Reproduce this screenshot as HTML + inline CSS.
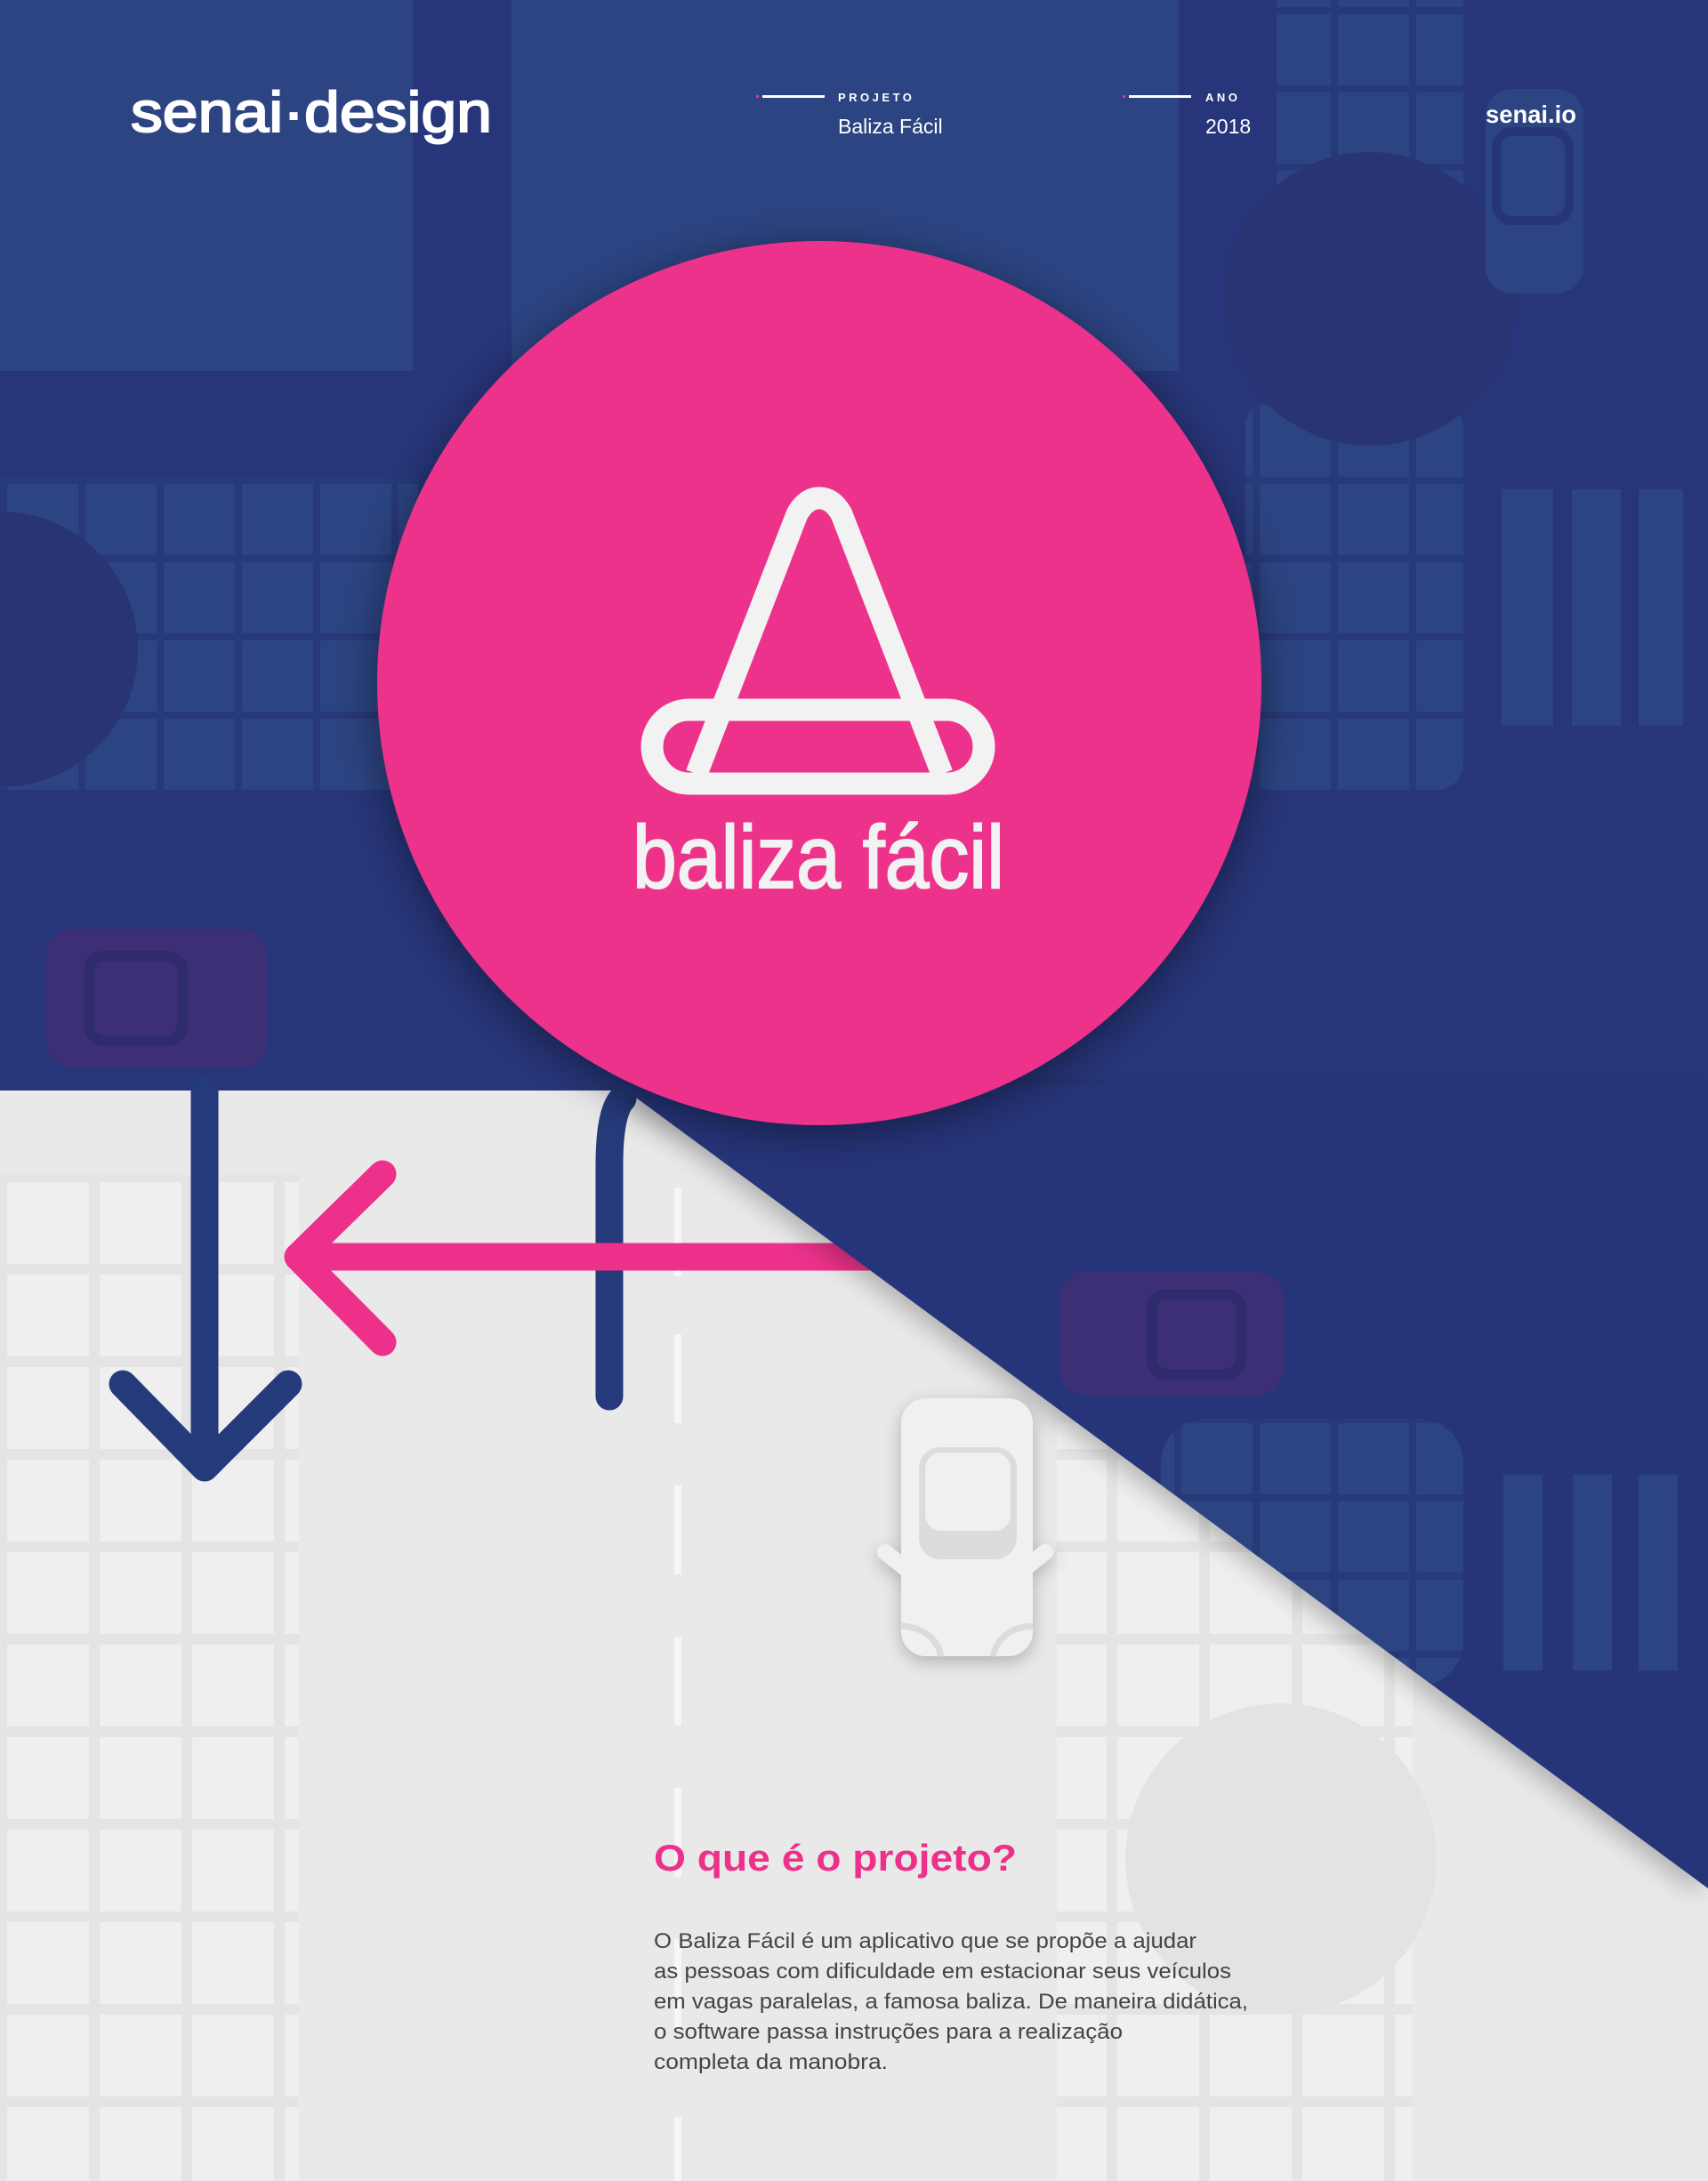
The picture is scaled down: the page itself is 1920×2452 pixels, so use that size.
<!DOCTYPE html>
<html><head><meta charset="utf-8"><style>
html,body{margin:0;padding:0;background:#e9e9e9;}
svg{display:block;}
text{font-family:"Liberation Sans",sans-serif;}
</style></head><body>
<svg width="1920" height="2452" viewBox="0 0 1920 2452" xmlns="http://www.w3.org/2000/svg">
<defs>
<pattern id="gl" x="0" y="1321" width="104" height="104" patternUnits="userSpaceOnUse">
<rect width="104" height="104" fill="#e4e4e4"/><rect x="8" y="8" width="92" height="92" fill="#efefef"/></pattern>
<pattern id="gb" x="0" y="536" width="88" height="88" patternUnits="userSpaceOnUse">
<rect width="88" height="88" fill="#283979"/><rect x="8" y="8" width="80" height="80" fill="#2c4482"/></pattern>
<clipPath id="tri"><polygon points="696,1220 1920,1220 1920,2123"/></clipPath>
<filter id="sh" x="-30%" y="-30%" width="160%" height="160%"><feGaussianBlur in="SourceAlpha" stdDeviation="25"/><feOffset dy="10"/><feComponentTransfer><feFuncA type="linear" slope="0.45"/></feComponentTransfer><feMerge><feMergeNode/><feMergeNode in="SourceGraphic"/></feMerge></filter>
<filter id="sh2" x="-30%" y="-30%" width="160%" height="160%"><feGaussianBlur in="SourceAlpha" stdDeviation="10"/><feOffset dy="6"/><feComponentTransfer><feFuncA type="linear" slope="0.25"/></feComponentTransfer><feMerge><feMergeNode/><feMergeNode in="SourceGraphic"/></feMerge></filter>
<filter id="sh3" x="-10%" y="-10%" width="120%" height="120%"><feGaussianBlur in="SourceAlpha" stdDeviation="14"/><feOffset dx="-8" dy="8"/><feComponentTransfer><feFuncA type="linear" slope="0.25"/></feComponentTransfer><feMerge><feMergeNode/><feMergeNode in="SourceGraphic"/></feMerge></filter>
</defs>
<rect x="0" y="1226" width="1920" height="1226" fill="#e9e9e9"/>
<rect x="0" y="1321" width="336" height="1131" fill="url(#gl)"/>
<rect x="1188" y="1600" width="400" height="852" fill="url(#gl)"/>
<circle cx="1440" cy="2090" r="175" fill="#e3e3e3"/>
<g fill="#f6f6f6"><rect x="758" y="1335" width="8" height="100"/><rect x="758" y="1500" width="8" height="100"/><rect x="758" y="1670" width="8" height="100"/><rect x="758" y="1840" width="8" height="100"/><rect x="758" y="2010" width="8" height="100"/><rect x="758" y="2180" width="8" height="100"/><rect x="758" y="2380" width="8" height="72"/></g>
<rect x="0" y="0" width="1920" height="1226" fill="#27367a"/>
<rect x="0" y="0" width="464" height="417" fill="#2c4482"/>
<rect x="575" y="0" width="750" height="417" fill="#2c4482"/>
<rect x="1435" y="0" width="210" height="417" fill="url(#gb)"/>
<rect x="0" y="536" width="470" height="352" fill="url(#gb)"/>
<rect x="1400" y="450" width="245" height="438" rx="30" fill="url(#gb)"/>
<g fill="#2c4482"><rect x="1688" y="550" width="58" height="266"/><rect x="1767" y="550" width="55" height="266"/><rect x="1842" y="550" width="50" height="266"/></g>
<circle cx="1540" cy="336" r="165" fill="#283474"/>
<circle cx="0" cy="730" r="155" fill="#283474"/>
<rect x="1670" y="100" width="110" height="230" rx="30" fill="#2c4482"/>
<rect x="1682" y="148" width="82" height="100" rx="18" fill="none" stroke="#263576" stroke-width="10"/>
<rect x="52" y="1044" width="248" height="157" rx="30" fill="#3d2f75"/>
<rect x="100" y="1075" width="105" height="95" rx="16" fill="none" stroke="#2f2b6c" stroke-width="12"/>
<g fill="#34488a"><rect x="1115" y="1236" width="131" height="11"/><rect x="1348" y="1236" width="131" height="11"/><rect x="1546" y="1236" width="132" height="11"/><rect x="1779" y="1236" width="132" height="11"/></g>
<g fill="none" stroke="#253a7a" stroke-width="31" stroke-linecap="round" stroke-linejoin="round">
<path d="M230 1226 V1650 M138 1556 L230 1650 L324 1556"/>
<path d="M685 1570 V1310 Q685 1250 700 1235"/>
</g>
<g fill="none" stroke="#ed318b" stroke-width="31" stroke-linecap="round" stroke-linejoin="round">
<path d="M980 1413 H335 M430 1320 L335 1413 L430 1509"/>
</g>
<polygon points="696,1220 1920,1220 1920,2123" fill="#27367a" filter="url(#sh3)"/>
<g clip-path="url(#tri)">
<rect x="1191" y="1430" width="251" height="138" rx="28" fill="#3d2f75"/>
<rect x="1295" y="1455" width="100" height="90" rx="16" fill="none" stroke="#2f2b6c" stroke-width="12"/>
<rect x="1305" y="1595" width="340" height="300" rx="50" fill="url(#gb)"/>
<g fill="#2c4482"><rect x="1690" y="1658" width="44" height="220"/><rect x="1768" y="1658" width="44" height="220"/><rect x="1842" y="1658" width="44" height="220"/></g>
</g>
<g filter="url(#sh2)">
<path d="M995 1745 L1020 1765 M1175 1745 L1150 1765" stroke="#f0f0f0" stroke-width="18" stroke-linecap="round"/>
<rect x="1013" y="1572" width="148" height="290" rx="28" fill="#f0f0f0"/>
<rect x="1033" y="1627" width="110" height="126" rx="24" fill="#dcdcdc"/>
<rect x="1040" y="1633" width="96" height="88" rx="18" fill="#f0f0f0"/>
<path d="M1013 1828 Q1050 1830 1058 1862 M1161 1828 Q1124 1830 1116 1862" stroke="#dcdcdc" stroke-width="7" fill="none"/>
</g>
<circle cx="921" cy="768" r="497" fill="#ed318b" filter="url(#sh)"/>
<g fill="none" stroke="#f2f2f2" stroke-width="25" stroke-linejoin="round">
<path d="M783 870 L896 578 Q906 560 921 560 Q936 560 946 578 L1059 870"/>
<rect x="733" y="798" width="373" height="83" rx="41.5"/>
</g>
<text x="711" y="998" font-size="100" fill="#f2f2f2" stroke="#f2f2f2" stroke-width="2" textLength="418" lengthAdjust="spacingAndGlyphs">baliza fácil</text>
<text x="147" y="148" font-size="64" fill="#fff" stroke="#fff" stroke-width="2" textLength="406" lengthAdjust="spacingAndGlyphs">senai·design</text>
<rect x="850" y="107" width="3" height="3" fill="#ed318b"/><rect x="857" y="107" width="70" height="3" fill="#fff"/>
<text x="942" y="114" font-size="13" font-weight="bold" fill="#fff" letter-spacing="3.5">PROJETO</text>
<text x="942" y="150" font-size="23" fill="#fff">Baliza Fácil</text>
<rect x="1262" y="107" width="3" height="3" fill="#ed318b"/><rect x="1269" y="107" width="70" height="3" fill="#fff"/>
<text x="1355" y="114" font-size="13" font-weight="bold" fill="#fff" letter-spacing="3.5">ANO</text>
<text x="1355" y="150" font-size="23" fill="#fff">2018</text>
<text x="1670" y="138" font-size="28" font-weight="bold" fill="#fff" textLength="102" lengthAdjust="spacingAndGlyphs">senai.io</text>
<text x="735" y="2103" font-size="42" font-weight="bold" fill="#ed318b" textLength="408" lengthAdjust="spacingAndGlyphs">O que é o projeto?</text>
<g font-size="24" fill="#444">
<text x="735" y="2190" textLength="610" lengthAdjust="spacingAndGlyphs">O Baliza Fácil é um aplicativo que se propõe a ajudar</text>
<text x="735" y="2224" textLength="649" lengthAdjust="spacingAndGlyphs">as pessoas com dificuldade em estacionar seus veículos</text>
<text x="735" y="2258" textLength="668" lengthAdjust="spacingAndGlyphs">em vagas paralelas, a famosa baliza. De maneira didática,</text>
<text x="735" y="2292" textLength="527" lengthAdjust="spacingAndGlyphs">o software passa instruções para a realização</text>
<text x="735" y="2326" textLength="263" lengthAdjust="spacingAndGlyphs">completa da manobra.</text>
</g>
</svg>
</body></html>
